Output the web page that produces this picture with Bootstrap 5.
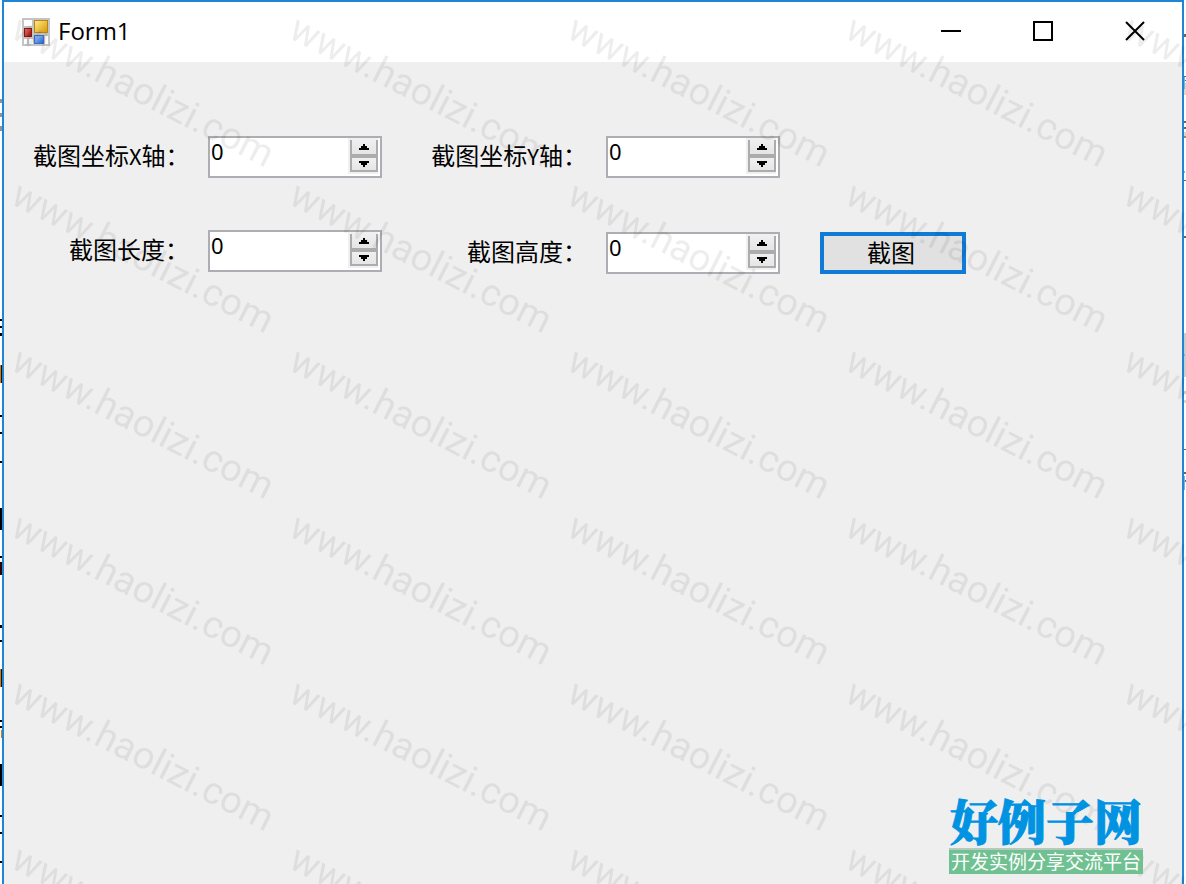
<!DOCTYPE html>
<html lang="zh-CN">
<head>
<meta charset="utf-8">
<meta name="viewport" content="width=device-width, initial-scale=1">
<title>Form1</title>
<link href="https://cdn.jsdelivr.net/npm/bootstrap@5.3.0/dist/css/bootstrap.min.css" rel="stylesheet">
<style>
  body { background: #fff; color: #000; font-family: "Noto Sans", "Noto Sans CJK SC", sans-serif; overflow: hidden; }
  .edge { width: 2px; flex: none; }
  .form-window { border: 2px solid #1f86d6; border-bottom: 0; background: #efefef; min-width: 0; }
  .title-bar { height: 60px; background: #fff; padding: 0 1px 2px 17px; }
  .title-text { font: 24px/32px "Open Sans", sans-serif; }
  .caption-btn { width: 92px; height: 56px; border: 0; background: transparent; padding: 0; display: flex; align-items: center; justify-content: center; }
  .form-area { padding: 74px 28px 0 29px; }
  .field-col-a { display: grid; row-gap: 52px; }
  .field-col-b { display: grid; row-gap: 54px; margin-left: 49px; }
  .field-row { display: grid; grid-template-columns: 156px 174px; column-gap: 19px; align-items: center; }
  .field-label { font: 24px/32px "Noto Sans CJK SC", sans-serif; padding-bottom: 4px; text-align: right; white-space: nowrap; }
  .axis { font-size: 22px; }
  .spin-box { display: flex; height: 42px; border: 2px solid #adadb3; background: #fff; padding-right: 2px; }
  .spin-box input { flex: 1; min-width: 0; height: 26px; border: 0; outline: 0; padding: 0 1px; background: transparent; font: 22px/26px "Noto Sans", sans-serif; color: #000; appearance: textfield; -moz-appearance: textfield; }
  .spin-box input::-webkit-inner-spin-button, .spin-box input::-webkit-outer-spin-button { appearance: none; -webkit-appearance: none; margin: 0; }
  .spinner-btns { width: 30px; height: 36px; background: #f0f0f0; padding: 2px 0 0 2px; display: flex; flex-direction: column; }
  .spinner-btns button { display: flex; align-items: center; justify-content: center; height: 16px; padding: 0; border: 2px solid #acacac; background: linear-gradient(#f0f0f0, #e5e5e5); }
  .spinner-btns button:first-child { border-top: 0; }
  .spinner-btns svg { flex: none; }
  .shot-btn { width: 146px; height: 42px; margin-left: 40px; border: 4px solid #0f7bd7; background: #e1e1e1; color: #000; font: 24px/32px "Noto Sans CJK SC", sans-serif; padding: 0 4px 2px 0; }
  .site-logo { width: 194px; margin: 0 39px 10px 0; text-decoration: none; }
  .logo-name { font: 900 48px/44px "Noto Serif CJK SC", "Noto Sans CJK SC", sans-serif; padding: 0 0 6px 1px; color: #0093e2; -webkit-text-stroke: 1px #0093e2; white-space: nowrap; }
  .logo-tag { font: 19px/22px "Noto Sans CJK SC", sans-serif; padding-bottom: 2px; color: #fff; background: #70c191; border-top: 2px solid #b5c9bc; white-space: nowrap; text-align: center; }
  .watermark { pointer-events: none; }
  .watermark text { font-family: Roboto, sans-serif; font-size: 38px; }
</style>
</head>
<body>
<div class="d-flex vh-100 position-relative">
  <svg class="edge h-100" aria-hidden="true">
    <path d="M1 99v4M1 113v4M1 126v5" stroke="#8795a5" stroke-width="2"/>
    <path d="M1 319v2M1 326v2M1 333v3M1 415v2M1 432v2M1 461v2M1 508v22M1 556v2M1 625v3M1 640v2M1 720v2M1 726v2M1 764v22M1 815v2M1 832v2M1 861v2" stroke="#000" stroke-width="2"/>
    <path d="M0 365h2v18h-2zM0 669h2v18h-2z" fill="#111"/>
    <path d="M0 365h1v18h-1zM0 669h1v18h-1zM1 730h1v8h-1z" fill="#d67a13"/>
    <path d="M0 562h2v13h-2z" fill="#300"/>
  </svg>

  <main class="form-window flex-grow-1 d-flex flex-column">
    <header class="title-bar d-flex align-items-center">
      <svg width="29" height="29" viewBox="0 0 29 29" class="me-2" aria-hidden="true">
        <defs>
          <linearGradient id="gold" x2="1" y2="1"><stop stop-color="#ffe88a"/><stop offset="1" stop-color="#d99a08"/></linearGradient>
          <linearGradient id="ruby" x2="1" y2="1"><stop stop-color="#e8776c"/><stop offset="1" stop-color="#a50d0d"/></linearGradient>
          <linearGradient id="azure" x2="1" y2="1"><stop stop-color="#9ac4fa"/><stop offset="1" stop-color="#2765cf"/></linearGradient>
        </defs>
        <rect x="1" y="1" width="28" height="28" fill="#c4c4c4"/>
        <path d="M3 3h8v6H3zM3 22h3v5H3zM8 22h4v5H8zM24 19h3v8h-3z" fill="#fff"/>
        <rect x="13" y="3" width="14" height="13" fill="#b9850b"/><rect x="14" y="4" width="12" height="11" fill="url(#gold)"/>
        <rect x="3" y="11" width="8" height="9" fill="#8d1414"/><rect x="4" y="12" width="6" height="7" fill="url(#ruby)"/>
        <rect x="13" y="18" width="10" height="9" fill="#3b6fc4"/><rect x="14" y="19" width="8" height="7" fill="url(#azure)"/>
      </svg>
      <span class="title-text flex-grow-1">Form1</span>
      <button class="caption-btn" type="button" aria-label="最小化"><svg width="20" height="20"><path d="M0 10h20" stroke="#000" stroke-width="2"/></svg></button>
      <button class="caption-btn" type="button" aria-label="最大化"><svg width="20" height="20"><path d="M1 1h18v18H1z" fill="none" stroke="#000" stroke-width="2"/></svg></button>
      <button class="caption-btn" type="button" aria-label="关闭"><svg width="20" height="20"><path d="M1 1l18 18M19 1L1 19" stroke="#000" stroke-width="2"/></svg></button>
    </header>

    <form class="form-area d-flex align-items-end">
      <div class="field-col-a align-self-start">
        <div class="field-row">
          <label class="field-label" for="posX">截图坐标<span class="axis">X</span>轴：</label>
          <div class="spin-box">
            <input id="posX" type="number" value="0">
            <div class="spinner-btns">
              <button type="button" aria-label="增加"><svg width="10" height="6"><path d="M0 6V4h2V2h2V0h2v2h2v2h2v2z"/></svg></button>
              <button type="button" aria-label="减少"><svg width="10" height="6"><path d="M0 0v2h2v2h2v2h2V4h2V2h2V0z"/></svg></button>
            </div>
          </div>
        </div>
        <div class="field-row">
          <label class="field-label" for="shotLength">截图长度：</label>
          <div class="spin-box">
            <input id="shotLength" type="number" value="0">
            <div class="spinner-btns">
              <button type="button" aria-label="增加"><svg width="10" height="6"><path d="M0 6V4h2V2h2V0h2v2h2v2h2v2z"/></svg></button>
              <button type="button" aria-label="减少"><svg width="10" height="6"><path d="M0 0v2h2v2h2v2h2V4h2V2h2V0z"/></svg></button>
            </div>
          </div>
        </div>
      </div>
      <div class="field-col-b">
        <div class="field-row">
          <label class="field-label" for="posY">截图坐标<span class="axis">Y</span>轴：</label>
          <div class="spin-box">
            <input id="posY" type="number" value="0">
            <div class="spinner-btns">
              <button type="button" aria-label="增加"><svg width="10" height="6"><path d="M0 6V4h2V2h2V0h2v2h2v2h2v2z"/></svg></button>
              <button type="button" aria-label="减少"><svg width="10" height="6"><path d="M0 0v2h2v2h2v2h2V4h2V2h2V0z"/></svg></button>
            </div>
          </div>
        </div>
        <div class="field-row">
          <label class="field-label" for="shotHeight">截图高度：</label>
          <div class="spin-box">
            <input id="shotHeight" type="number" value="0">
            <div class="spinner-btns">
              <button type="button" aria-label="增加"><svg width="10" height="6"><path d="M0 6V4h2V2h2V0h2v2h2v2h2v2z"/></svg></button>
              <button type="button" aria-label="减少"><svg width="10" height="6"><path d="M0 0v2h2v2h2v2h2V4h2V2h2V0z"/></svg></button>
            </div>
          </div>
        </div>
      </div>
      <button class="shot-btn" type="submit">截图</button>
    </form>

    <a class="site-logo d-block mt-auto align-self-end position-relative z-1" href="#">
      <div class="logo-name">好例子网</div>
      <div class="logo-tag">开发实例分享交流平台</div>
    </a>
  </main>

  <svg class="edge h-100" aria-hidden="true">
    <path d="M0 333h2v44H0z" fill="#ccc"/>
    <path d="M1 34v3M1 76v1M1 80v1M1 121v2M1 127v2M1 136v2M1 180v1M1 236v2M1 449v1M1 472v2M1 480v2" stroke="#666" stroke-width="2"/>
    <path d="M1 83v12M1 132v6M1 391v3M1 400v3" stroke="#d1a97c" stroke-width="1"/>
    <path d="M0 77v12M0 171v2M0 354v2M0 476v14" stroke="#69b8ee" stroke-width="2"/>
  </svg>

  <svg class="watermark position-absolute top-0 start-0 w-100 h-100" aria-hidden="true">
    <defs>
      <pattern id="wm" x="4" y="6" width="278" height="166" patternUnits="userSpaceOnUse">
        <text transform="translate(5 31) rotate(27)" fill="#000" fill-opacity=".07">www.haolizi.com</text>
      </pattern>
    </defs>
    <rect width="100%" height="100%" fill="url(#wm)"/>
  </svg>
</div>
<script src="https://cdn.jsdelivr.net/npm/bootstrap@5.3.0/dist/js/bootstrap.bundle.min.js"></script>
</body>
</html>
